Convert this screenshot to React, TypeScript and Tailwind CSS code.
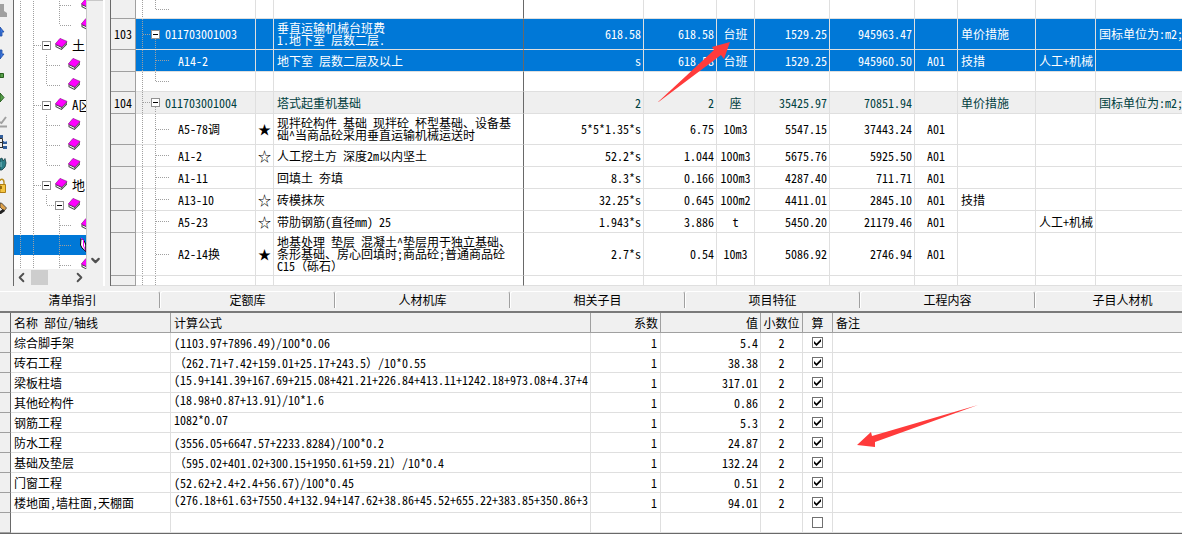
import { useState } from 'react';
import type { ReactNode } from 'react';
import { ChevronDown, ChevronLeft, ChevronRight } from 'lucide-react';

type RowKind = 'tail' | 'parent' | 'child' | 'pass';

interface QuotaRow {
  kind: RowKind;
  height: number;
  no?: string;
  code?: string;
  star?: string;
  name?: string;
  expr?: string;
  qty?: string;
  unit?: string;
  price?: string;
  total?: string;
  fee?: string;
  measure?: string;
  adjust?: string;
  note?: string;
  selected?: boolean;
}

interface FormulaRow {
  name: string;
  formula: string;
  value: string;
  top?: boolean;
}

const quotaRows: QuotaRow[] = [
  { kind: 'tail', height: 19 },
  {
    kind: 'parent', height: 31, no: '103', code: '011703001003', name: '垂直运输机械台班费\n1.地下室 层数二层.', expr: '618.58',
    qty: '618.58', unit: '台班', price: '1529.25', total: '945963.47', measure: '单价措施', note: '国标单位为:m2;', selected: true,
  },
  {
    kind: 'child', height: 22, code: 'A14-2', name: '地下室 层数二层及以上', expr: 's', qty: '618.58', unit: '台班',
    price: '1529.25', total: '945960.50', fee: 'A01', measure: '技措', adjust: '人工+机械', selected: true,
  },
  { kind: 'tail', height: 20 },
  {
    kind: 'parent', height: 22, no: '104', code: '011703001004', name: '塔式起重机基础', expr: '2', qty: '2', unit: '座',
    price: '35425.97', total: '70851.94', measure: '单价措施', note: '国标单位为:m2;',
  },
  {
    kind: 'child', height: 31, code: 'A5-78调', star: '★', name: '现拌砼构件 基础 现拌砼 杯型基础、设备基\n础^当商品砼采用垂直运输机械运送时',
    expr: '5*5*1.35*s', qty: '6.75', unit: '10m3', price: '5547.15', total: '37443.24', fee: 'A01',
  },
  { kind: 'child', height: 22, code: 'A1-2', star: '☆', name: '人工挖土方 深度2m以内坚土', expr: '52.2*s', qty: '1.044', unit: '100m3', price: '5675.76', total: '5925.50', fee: 'A01' },
  { kind: 'child', height: 22, code: 'A1-11', name: '回填土 夯填', expr: '8.3*s', qty: '0.166', unit: '100m3', price: '4287.40', total: '711.71', fee: 'A01' },
  { kind: 'child', height: 22, code: 'A13-10', star: '☆', name: '砖模抹灰', expr: '32.25*s', qty: '0.645', unit: '100m2', price: '4411.01', total: '2845.10', fee: 'A01', measure: '技措' },
  { kind: 'child', height: 22, code: 'A5-23', star: '☆', name: '带肋钢筋(直径mm) 25', expr: '1.943*s', qty: '3.886', unit: 't', price: '5450.20', total: '21179.46', fee: 'A01', adjust: '人工+机械' },
  {
    kind: 'child', height: 43, code: 'A2-14换', star: '★', name: '地基处理 垫层 混凝土^垫层用于独立基础、\n条形基础、房心回填时;商品砼;普通商品砼\nC15（砾石）',
    expr: '2.7*s', qty: '0.54', unit: '10m3', price: '5086.92', total: '2746.94', fee: 'A01',
  },
  { kind: 'pass', height: 10 },
];

const tabs = ['清单指引', '定额库', '人材机库', '相关子目', '项目特征', '工程内容', '子目人材机'];

const formulaRows: FormulaRow[] = [
  { name: '综合脚手架', formula: '(1103.97+7896.49)/100*0.06', value: '5.4' },
  { name: '砖石工程', formula: '（262.71+7.42+159.01+25.17+243.5）/10*0.55', value: '38.38' },
  { name: '梁板柱墙', formula: '(15.9+141.39+167.69+215.08+421.21+226.84+413.11+1242.18+973.08+4.37+4', value: '317.01', top: true },
  { name: '其他砼构件', formula: '(18.98+0.87+13.91)/10*1.6', value: '0.86', top: true },
  { name: '钢筋工程', formula: '1082*0.07', value: '5.3', top: true },
  { name: '防水工程', formula: '(3556.05+6647.57+2233.8284)/100*0.2', value: '24.87' },
  { name: '基础及垫层', formula: '（595.02+401.02+300.15+1950.61+59.21）/10*0.4', value: '132.24' },
  { name: '门窗工程', formula: '(52.62+2.4+2.4+56.67)/100*0.45', value: '0.51' },
  { name: '楼地面,墙柱面,天棚面', formula: '(276.18+61.63+7550.4+132.94+147.62+38.86+45.52+655.22+383.85+350.86+3', value: '94.01', top: true },
  { name: '', formula: '', value: '' },
];

// dotted guide lines, given as svg path data
function Guides({ d, width, height }: { d: string; width: number; height: number }) {
  return (
    <svg width={width} height={height} className="block shrink-0" shapeRendering="crispEdges" aria-hidden="true">
      <path d={d} fill="none" stroke="#a0a0a0" strokeDasharray="1 1" />
    </svg>
  );
}

function Toggle() {
  return (
    <button type="button" aria-label="折叠" className="flex size-[9px] shrink-0 items-center justify-center border border-[#919191] bg-white">
      <span className="h-px w-[5px] bg-black" />
    </button>
  );
}

function Book({ open }: { open?: boolean }) {
  if (open) {
    return (
      <svg width="13" height="15" viewBox="0 0 13 15" className="shrink-0" aria-hidden="true">
        <path d="M1 1.5 L4 3.5 L6 8 V14.5 L2 11 L0.5 8 Z" fill="#fff" stroke="#000" />
        <path d="M1 1 L3.5 3 V9 L6 14" fill="none" stroke="#f0f" />
        <path d="M6 14 V6 L11 3 V11 Z" fill="#fff" stroke="#000" />
      </svg>
    );
  }
  return (
    <svg width="13" height="12" viewBox="0 0 13 12" className="shrink-0" aria-hidden="true">
      <path d="M0.5 6 L0.5 9 L6.5 12 L12 6.5 V3.5 L7 9 Z" fill="#404040" />
      <path d="M1.2 7.2 L6.4 9.8 L6.6 11 L1.6 8.6 Z" fill="#fff" />
      <path d="M7.4 9.8 L11.6 4.8" stroke="#c0c0c0" strokeWidth="0.8" />
      <path d="M0.3 6 L5 0.4 L12 3.4 L7 9 Z" fill="#f0f" stroke="#800080" strokeWidth="0.6" />
    </svg>
  );
}

function TreeRow({ d, width, toggle, open, selected, children }: {
  d: string; width: number; toggle?: boolean; open?: boolean; selected?: boolean; children?: ReactNode;
}) {
  return (
    <li className={`flex h-5 items-center whitespace-nowrap ${selected ? 'bg-[#0078d7]' : ''}`}>
      <Guides d={d} width={width} height={20} />
      {toggle && <Toggle />}
      <span className="flex items-center gap-1 pb-[2px] pl-1">
        <Book open={open} />
        {children && <span className="pt-[2px] text-[13px]">{children}</span>}
      </span>
    </li>
  );
}

const trunk = 'M6.5 0V20 M19.5 0V20';

function ProjectTree() {
  return (
    <div className="flex w-[92px] shrink-0 flex-col border-l border-[#696969] border-r-2 border-r-white bg-[#f0f0f0]">
      <div className="flex min-h-0 flex-1">
        <div className="h-[269px] w-[73px] overflow-hidden border-r border-[#c8c8c8] bg-white">
          <ul className="-mt-[5px]">
            <TreeRow d={`${trunk} M45.5 0V20 M46 10.5H58`} width={63} />
            <TreeRow d={`${trunk} M45.5 0V10 M46 10.5H58`} width={63} />
            <TreeRow d={`${trunk} M20 10.5H28`} width={28} toggle>土</TreeRow>
            <TreeRow d={`${trunk} M32.5 0V20 M33 10.5H46`} width={50} />
            <TreeRow d={`${trunk} M32.5 0V10 M33 10.5H46`} width={50} />
            <TreeRow d={`${trunk} M20 10.5H28`} width={28} toggle>A区</TreeRow>
            <TreeRow d={`${trunk} M32.5 0V20 M33 10.5H46`} width={50} />
            <TreeRow d={`${trunk} M32.5 0V20 M33 10.5H46`} width={50} />
            <TreeRow d={`${trunk} M32.5 0V10 M33 10.5H46`} width={50} />
            <TreeRow d={`${trunk} M20 10.5H28`} width={28} toggle>地</TreeRow>
            <TreeRow d={`${trunk} M32.5 0V10 M33 10.5H41`} width={41} toggle />
            <TreeRow d={`${trunk} M45.5 0V20 M46 10.5H58`} width={63} />
            <TreeRow d={`${trunk} M45.5 0V20 M46 10.5H58`} width={62} open selected />
            <TreeRow d={`${trunk} M45.5 0V20 M46 10.5H58`} width={63} />
          </ul>
        </div>
        <div className="flex flex-1 items-end justify-center border-t border-[#c8c8c8]">
          <button type="button" aria-label="向下滚动" className="pb-[2px]">
            <ChevronDown size={13} strokeWidth={4} className="text-[#505050]" />
          </button>
        </div>
      </div>
      <div className="flex h-[17px] w-[73px] items-center justify-between">
        <button type="button" aria-label="向左滚动">
          <ChevronLeft size={15} strokeWidth={3} className="text-[#505050]" />
        </button>
        <div className="mr-auto ml-[2px] h-[15px] w-[17px] bg-[#cdcdcd]" />
        <button type="button" aria-label="向右滚动">
          <ChevronRight size={15} strokeWidth={3} className="text-[#505050]" />
        </button>
      </div>
    </div>
  );
}

function Toolbar() {
  return (
    <div className="w-[13px] shrink-0 bg-[#f0f0f0]">
      <svg width="12" height="220" viewBox="0 0 12 220" className="block" aria-hidden="true">
        <path d="M0 4 H4 V11 L7 13 V17 H0 Z" fill="#a0a0a0" />
        <path d="M0 27 L4 32 H2 V36 H0 Z" fill="#3c78e0" stroke="#1c49a0" strokeWidth="0.8" />
        <path d="M0 50 H2 V54 H4 L0 59 Z" fill="#3c78e0" stroke="#1c49a0" strokeWidth="0.8" />
        <path d="M0 73.5 H3.5 V77.5 H0 Z" fill="#58a04c" stroke="#28601f" />
        <path d="M0 93 L4 97.5 L0 102 Z" fill="#58a04c" stroke="#28601f" />
        <path d="M0 122 L1.5 123 L6 117 M0 126.5 H7" fill="none" stroke="#a0a0a0" strokeWidth="2" />
        <path d="M0 138.5 H2.5 V148 M0 142.5 H3 M0 147.5 H3" fill="none" stroke="#303030" />
        <path d="M0 135 H3 V138 H0 Z M3 141 H7 V144 H3 Z M3 146 H7 V149 H3 Z" fill="#335f9c" />
        <path d="M4 141.5 H6.5" stroke="#a9c6ee" />
        <path d="M0 159 L2 158 L3 161 L5 158.5 L6 163 L5 167 L2 170 H0 Z" fill="#2d8088" stroke="#153e44" strokeWidth="0.8" />
        <path d="M1 162 V167" stroke="#7fc4c9" />
        <path d="M0 181 C0 178.500 4 178.500 4 182.500 V184" fill="none" stroke="#b98e20" strokeWidth="1.4" />
        <path d="M0 184.5 H5.5 V192.5 H0 Z" fill="#f4c542" stroke="#b07e14" />
        <path d="M1 186 V189" stroke="#7a5305" strokeWidth="1.5" />
        <path d="M0 203 L1.500 203 L6.500 208 L4 211 L0 207 Z" fill="#dca04a" stroke="#333" strokeWidth="0.8" />
        <path d="M0 211 L3 209 L5 211 L1 214 H0 Z" fill="#222" />
      </svg>
    </div>
  );
}

function CodeCell({ row }: { row: QuotaRow }) {
  const h = row.height - 1;
  const mid = Math.floor(h / 2) + 0.5;
  if (row.kind === 'parent') {
    const below = (h - 9) / 2;
    return (
      <div className="flex items-center">
        <Guides d={`M6.5 0V${h} M7 ${mid}H15`} width={15} height={h} />
        <div className="flex flex-col items-center justify-end" style={{ height: h }}>
          <Toggle />
          <Guides d={`M0.500 0V${below}`} width={1} height={below} />
        </div>
        <span className="pl-[5px]">{row.code}</span>
      </div>
    );
  }
  const second = row.kind === 'tail' ? `M19.5 0V${mid}` : `M19.5 0V${h}`;
  const branch = row.kind === 'pass' ? '' : `M20 ${mid}H33`;
  return (
    <div className="flex items-center">
      <Guides d={`M6.5 0V${h} ${second} ${branch}`} width={42} height={h} />
      <span>{row.code}</span>
    </div>
  );
}

function QuotaTable() {
  const cell = 'whitespace-pre border-b border-r border-[#dfdfdf] p-0';
  return (
    <table className="w-full table-fixed border-separate border-spacing-0 leading-3">
      <colgroup>
        <col className="w-[25px]" />
        <col className="w-[120px]" />
        <col className="w-[18px]" />
        <col className="w-[250px]" />
        <col className="w-[120px]" />
        <col className="w-[73px]" />
        <col className="w-[38px]" />
        <col className="w-[75px]" />
        <col className="w-[85px]" />
        <col className="w-[43px]" />
        <col className="w-[78px]" />
        <col className="w-[60px]" />
        <col />
      </colgroup>
      <tbody>
        {quotaRows.map((row, i) => {
          let tone = 'bg-white text-black';
          if (row.selected) tone = 'bg-[#0078d7] text-white';
          else if (row.kind === 'parent') tone = 'bg-[#efefef] text-[#004040]';
          return (
            <tr key={i} className={tone} style={{ height: row.height }}>
              <th className="border-r border-b border-[#a0a0a0] bg-[#f0f0f0] p-0 font-normal text-black">{row.no}</th>
              <td className={cell}><CodeCell row={row} /></td>
              <td className={`${cell} text-center text-[13px] leading-3 text-black`}>{row.star}</td>
              <td className="border-r border-b border-r-[#696969] border-b-[#dfdfdf] p-0 pl-[3px] whitespace-pre">{row.name}</td>
              <td className={`${cell} pr-[2px] text-right`}>{row.expr}</td>
              <td className={`${cell} pr-[2px] text-right`}>{row.qty}</td>
              <td className={`${cell} text-center`}>{row.unit}</td>
              <td className={`${cell} pr-[2px] text-right`}>{row.price}</td>
              <td className={`${cell} pr-[2px] text-right`}>{row.total}</td>
              <td className={`${cell} text-center`}>{row.fee}</td>
              <td className={`${cell} pl-[3px]`}>{row.measure}</td>
              <td className={`${cell} pl-[3px]`}>{row.adjust}</td>
              <td className="border-b border-[#dfdfdf] p-0 pl-[3px] whitespace-pre">{row.note}</td>
            </tr>
          );
        })}
      </tbody>
    </table>
  );
}

function FormulaTable() {
  const [checked, setChecked] = useState(formulaRows.map((r) => r.name !== ''));
  const head = 'border-b border-r border-[#a0a0a0] p-0 font-normal';
  const cell = 'whitespace-pre border-b border-r border-[#dfdfdf] p-0';

  return (
    <table className="w-full table-fixed border-separate border-spacing-0 border-b border-[#696969] leading-4">
      <colgroup>
        <col className="w-[11px]" />
        <col className="w-[160px]" />
        <col className="w-[420px]" />
        <col className="w-[70px]" />
        <col className="w-[100px]" />
        <col className="w-[42px]" />
        <col className="w-[30px]" />
        <col />
      </colgroup>
      <thead>
        <tr className="h-5 bg-[#f0f0f0]">
          <th className="border-r border-b border-r-[#696969] border-b-[#a0a0a0] p-0" />
          <th className={`${head} pl-[3px] text-left`}>名称 部位/轴线</th>
          <th className={`${head} pl-[3px] text-left`}>计算公式</th>
          <th className={`${head} pr-[2px] text-right`}>系数</th>
          <th className={`${head} pr-[2px] text-right`}>值</th>
          <th className={head}>小数位</th>
          <th className={head}>算</th>
          <th className="border-b border-[#a0a0a0] p-0 pl-[3px] text-left font-normal">备注</th>
        </tr>
      </thead>
      <tbody>
        {formulaRows.map((row, i) => (
          <tr key={i} className="h-5 bg-white">
            <th className="border-r border-b border-r-[#696969] border-b-[#a0a0a0] bg-[#f0f0f0] p-0" />
            <td className={`${cell} pl-[3px]`}>{row.name}</td>
            <td className={`${cell} pl-[3px] ${row.top ? 'align-top leading-[14px]' : ''}`}>{row.formula}</td>
            <td className={`${cell} pr-[3px] text-right`}>{row.name && '1'}</td>
            <td className={`${cell} pr-[2px] text-right`}>{row.value}</td>
            <td className={`${cell} text-center`}>{row.name && '2'}</td>
            <td className={cell}>
              <label className="grid place-items-center">
                <input
                  type="checkbox"
                  aria-label={`计算 ${row.name}`}
                  checked={checked[i]}
                  onChange={() => setChecked(checked.map((c, n) => (n === i ? !c : c)))}
                  className="col-start-1 row-start-1 size-[11px] appearance-none border border-[#707070] bg-white"
                />
                {checked[i] && (
                  <svg width="7" height="7" viewBox="0 0 7 7" className="pointer-events-none col-start-1 row-start-1" aria-hidden="true">
                    <path d="M0 2 L2.5 4.5 L7 0 V2.6 L2.5 7 L0 4.6 Z" fill="#000" />
                  </svg>
                )}
              </label>
            </td>
            <td className="border-b border-[#dfdfdf] p-0" />
          </tr>
        ))}
      </tbody>
    </table>
  );
}

export default function App() {
  return (
    <div className="relative overflow-hidden bg-white font-['Noto_Sans_Mono_CJK_SC','Noto_Sans_CJK_SC',monospace] text-xs text-black">
      <div className="flex bg-[#f0f0f0]">
        <Toolbar />
        <ProjectTree />
        <div className="ml-[5px] min-w-0 flex-1 border-l border-[#696969]">
          <QuotaTable />
        </div>
      </div>

      <div role="tablist" className="flex overflow-hidden border-b-2 border-[#7a7a7a] bg-[#f0f0f0] pt-[5px] pb-[3px]">
        {tabs.map((tab, i) => (
          <button
            key={tab}
            type="button"
            role="tab"
            className={`h-[17px] w-[175px] shrink-0 rounded-t-[3px] border-t border-r border-l border-t-white border-r-[#a0a0a0] border-l-white leading-4 ${i === 0 ? '-ml-[15px]' : ''}`}
          >
            {tab}
          </button>
        ))}
      </div>

      <FormulaTable />

      <svg width="74" height="61" className="pointer-events-none absolute top-[41px] left-[657px]" aria-hidden="true">
        <path d="M1 61 L57 9 L55 6 L73 1 L67 18 L64 14 L1.5 61 Z" fill="#ff3b3b" />
      </svg>
      <svg width="122" height="42" className="pointer-events-none absolute top-[405px] left-[857px]" aria-hidden="true">
        <path d="M0 40 L14 27 L15 31 L121 0 L18 37 L18 42 Z" fill="#ff3b3b" />
      </svg>
    </div>
  );
}
